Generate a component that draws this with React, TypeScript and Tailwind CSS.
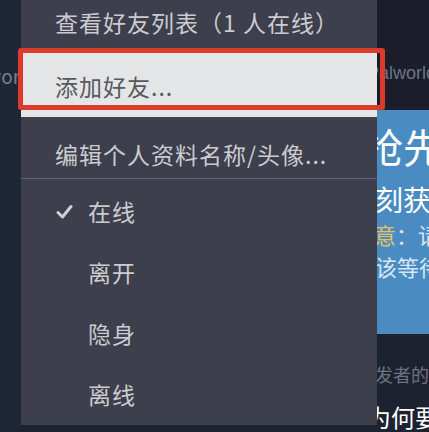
const menuFont = { fontFamily: '"Noto Sans CJK SC", "Noto Sans", sans-serif' };

const Check = () => (
  <svg width="17" height="16" viewBox="0 0 17 16" className="shrink-0">
    <path d="M2 8.5 L6.5 13 L15 2.5" fill="none" stroke="#cfd0d4" strokeWidth="3" strokeLinecap="round" strokeLinejoin="round" />
  </svg>
);

const StatusRow = ({ label, checked }: { label: string; checked?: boolean }) => (
  <div className="h-[61px] flex items-center pl-[35px]">
    <div className="w-[32px]">{checked && <Check />}</div>
    <span>{label}</span>
  </div>
);

export default function App() {
  return (
    <div
      className="relative w-[429px] h-[432px] overflow-hidden bg-[#1d2230] flex"
      style={menuFont}
    >
      {/* left strip behind the menu */}
      <div className="w-[21px] shrink-0 h-full bg-[#1f2737] overflow-hidden">
        <div className="mt-[62px] -ml-[14px] text-[19px] text-[#7a7f8e] whitespace-nowrap">wor</div>
      </div>

      {/* context menu */}
      <div className="w-[356px] shrink-0 flex flex-col">
        <div className="h-[425px] bg-[#3d3f4c] flex flex-col text-[23px] tracking-[1px] text-[#cbccd0]">
          <div className="h-[50px] flex items-center pl-[34px] pb-[6px]">查看好友列表（1 人在线）</div>
          <div className="h-[67px] flex items-center pl-[34px] pt-[6px] bg-[#e4e5e7] text-[#58595e]">添加好友...</div>
          <div className="h-[61px] flex items-center pl-[34px] pt-[14px]">编辑个人资料名称/头像...</div>
          <div className="h-px bg-[#5f6270]" />
          <div className="mt-[2px]">
            <StatusRow label="在线" checked />
            <StatusRow label="离开" />
            <StatusRow label="隐身" />
            <StatusRow label="离线" />
          </div>
        </div>
      </div>

      {/* store page behind, on the right */}
      <div className="flex-1 h-full overflow-hidden flex flex-col whitespace-nowrap" style={{ fontFamily: '"Noto Sans CJK SC", "Liberation Sans", sans-serif' }}>
        <div className="h-[110px] bg-[#1b1e2a] pt-[60px]">
          <div className="-ml-[10px] text-[18px] text-[#6f7485]" style={{ fontFamily: '"Liberation Sans", sans-serif' }}>Palworld</div>
        </div>
        <div className="h-[225px] bg-[#4a8cc1] flex flex-col">
          <div className="mt-[12px] -ml-[14px] text-[40px] leading-[48px] text-white">抢先体验</div>
          <div className="mt-[12px] -ml-[30px] text-[28px] leading-[34px] text-white">立刻获得</div>
          <div className="mt-[4px] -ml-[25px] text-[22px] leading-[28px] text-[#d6e6f4]">
            <span className="text-[#e9c25e]">注意</span>：请
          </div>
          <div className="mt-[4px] -ml-[24px] text-[22px] leading-[28px] text-[#d6e6f4]">应该等待</div>
        </div>
        <div className="flex-1 bg-[#1d2230] flex flex-col">
          <div className="mt-[28px] -ml-[20px] text-[18px] leading-[24px] text-[#6d7283]">开发者的</div>
          <div className="mt-[16px] -ml-[10px] text-[24px] leading-[30px] text-white">为何要</div>
        </div>
      </div>

      {/* red annotation box */}
      <div className="absolute left-[18px] top-[48px] w-[367px] h-[62px] border-[5px] border-[#dc3a2a] rounded-[3px]" />
    </div>
  );
}
